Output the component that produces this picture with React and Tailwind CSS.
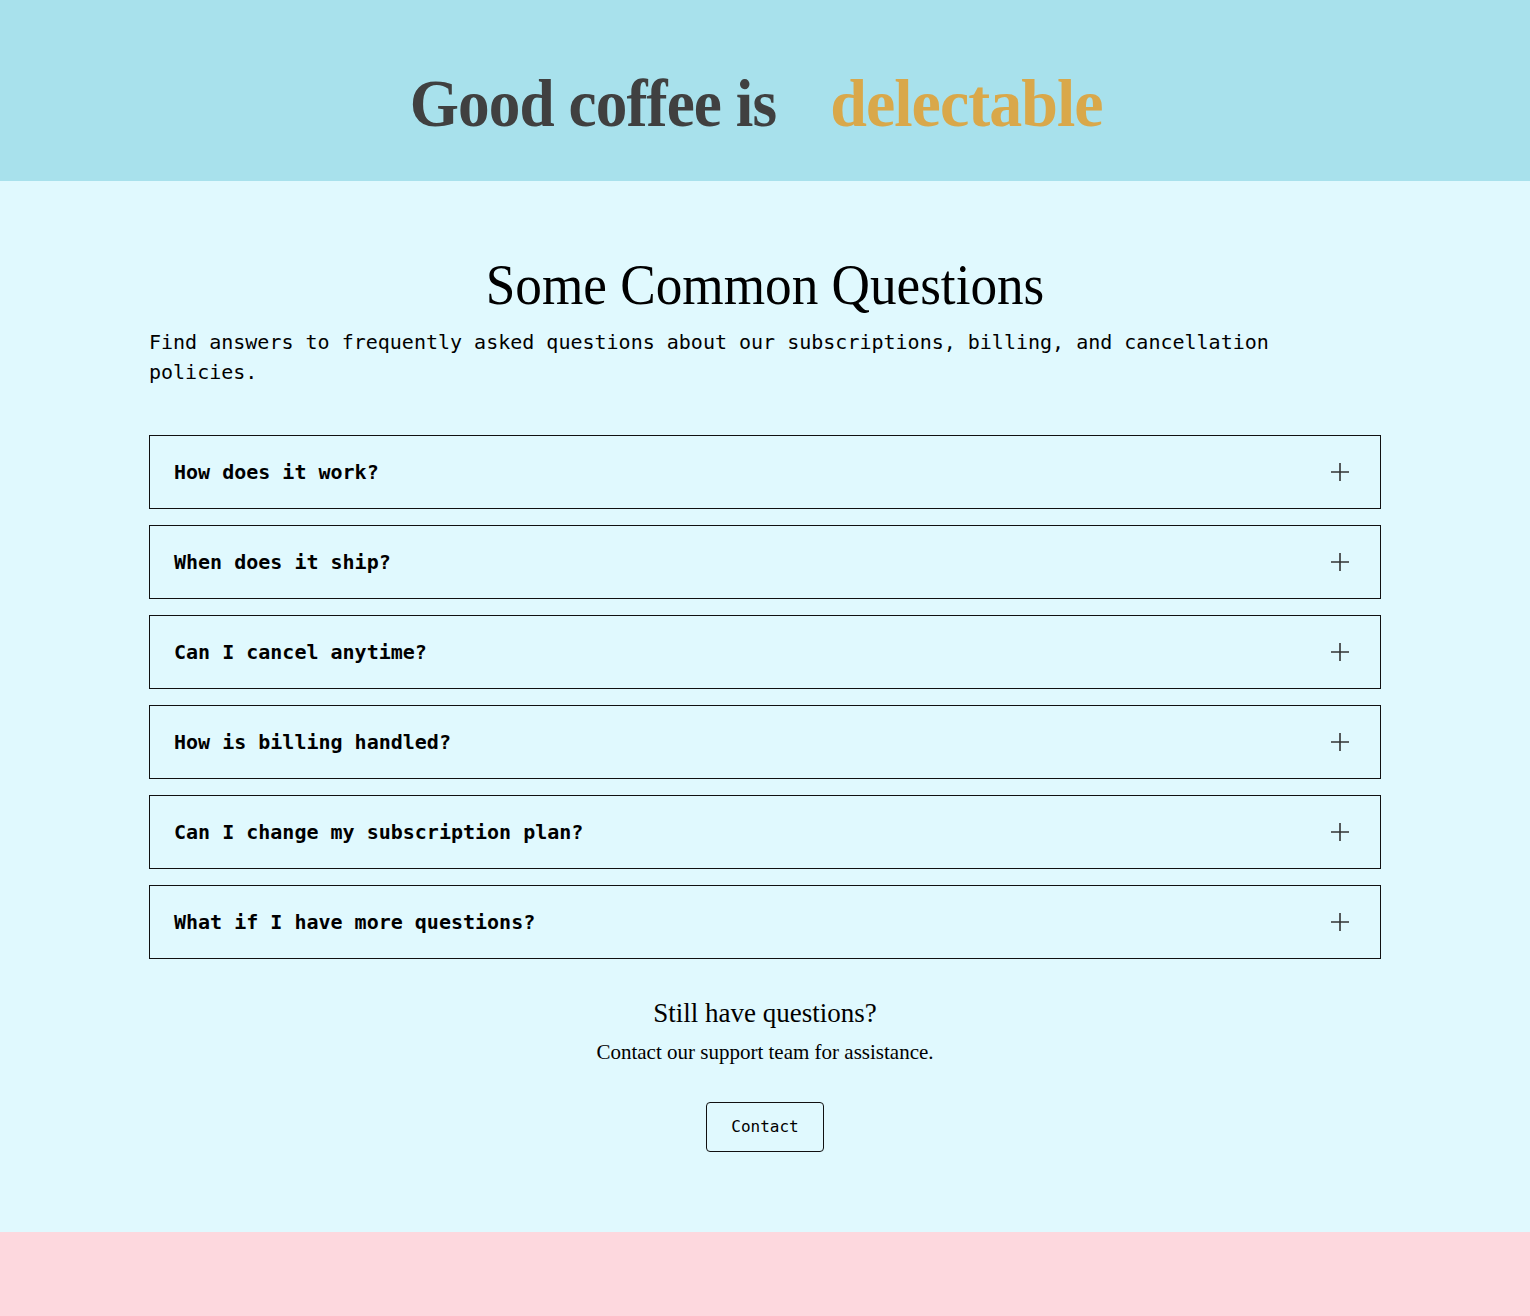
const questions = [
  "How does it work?",
  "When does it ship?",
  "Can I cancel anytime?",
  "How is billing handled?",
  "Can I change my subscription plan?",
  "What if I have more questions?",
];

const serif = "font-['Liberation_Serif',serif]";
const mono = "font-['DejaVu_Sans_Mono','Liberation_Mono',monospace]";

function PlusIcon() {
  return (
    <svg width="20" height="20" viewBox="0 0 20 20" className="text-[#333] shrink-0">
      <path d="M10 1v18M1 10h18" stroke="currentColor" strokeWidth="1.6" fill="none" />
    </svg>
  );
}

export default function App() {
  return (
    <div className="min-h-screen bg-[#e0f9fe]">
      {/* Banner */}
      <header className="h-[181px] bg-[#a8e1ec] flex items-center justify-center">
        <h1 className={`${serif} font-bold text-[68px] leading-none flex gap-[36px] pt-[24px] mr-[28px] tracking-[-1px]`}>
          <span className="text-[#404040] inline-block scale-x-[0.93]">Good coffee is</span>
          <span className="text-[#d9a84a] inline-block scale-x-[0.97]">delectable</span>
        </h1>
      </header>

      {/* FAQ */}
      <section className="max-w-[1232px] mx-auto pt-[72px] pb-[80px]">
        <h2 className={`${serif} text-[56px] leading-[64px] text-center text-black`}>
          <span className="inline-block scale-x-[0.95]">Some Common Questions</span>
        </h2>
        <p className={`${mono} text-[20px] leading-[30px] text-black mt-[10px]`}>
          Find answers to frequently asked questions about our subscriptions, billing, and cancellation policies.
        </p>

        <div className="mt-[48px] flex flex-col gap-4">
          {questions.map((q) => (
            <button
              key={q}
              className="h-[74px] w-full border border-[#111] flex items-center justify-between pl-6 pr-[30px] text-left"
            >
              <span className={`${mono} font-bold text-[20px] text-black`}>{q}</span>
              <PlusIcon />
            </button>
          ))}
        </div>

        <div className="mt-[36px] flex flex-col items-center">
          <h3 className={`${serif} text-[27px] leading-[36px] text-black`}>Still have questions?</h3>
          <p className={`${serif} text-[21px] leading-[30px] text-black mt-[6px]`}>
            Contact our support team for assistance.
          </p>
          <button className={`${mono} mt-[35px] w-[118px] h-[50px] border border-[#111] rounded-[4px] text-[16px] text-black`}>
            Contact
          </button>
        </div>
      </section>

      <footer className="h-[84px] bg-[#fdd8de]" />
    </div>
  );
}
